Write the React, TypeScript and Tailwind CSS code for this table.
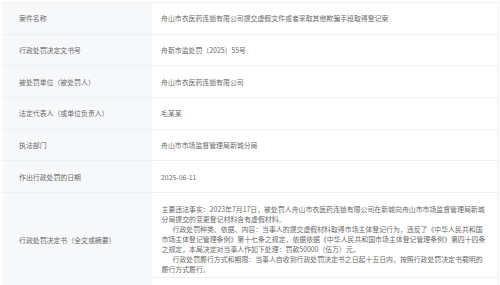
import React from "react";

const rows: [string, string][] = [
  ["案件名称", "舟山市衣医药连锁有限公司提交虚假文件或者采取其他欺骗手段取得登记案"],
  ["行政处罚决定文书号", "舟新市监处罚〔2025〕55号"],
  ["被处罚单位（被处罚人）", "舟山市衣医药连锁有限公司"],
  ["法定代表人（或单位负责人）", "毛某某"],
  ["执法部门", "舟山市市场监督管理局新城分局"],
  ["作出行政处罚的日期", "2025-06-11"],
];

export default function App() {
  return (
    <div
      className="w-[500px] h-[285px] overflow-hidden bg-white pt-[2px] pl-[2px]"
      style={{ fontFamily: '"Noto Sans CJK SC", "Noto Sans", sans-serif' }}
    >
      <div className="w-[497px] border-t border-r border-[#eef0f4] text-[6.9px] leading-[10px] text-[#6a6a6a]">
        {rows.map(([label, value]) => (
          <div key={label} className="flex h-[31.7px] border-b border-[#eef0f4]">
            <div className="w-[150px] shrink-0 bg-[#f7f8fa] pl-[17px] flex items-center">
              {label}
            </div>
            <div className="flex-1 pl-[9px] flex items-center">{value}</div>
          </div>
        ))}
        <div className="flex h-[93px]">
          <div className="w-[150px] shrink-0 bg-[#f7f8fa] pl-[17px] flex items-center">
            行政处罚决定书（全文或摘要）
          </div>
          <div className="flex-1 flex flex-col">
            <div className="h-[85px] border-b border-[#eef0f4] pl-[9.5px] pt-[10.7px] whitespace-nowrap">
              <p>
                主要违法事实：2023年7月17日，被处罚人舟山市衣医药连锁有限公司在新城向舟山市市场监督管理局新城
                <br />
                分局提交的变更登记材料含有虚假材料。
              </p>
              <p className="indent-[11px]">
                行政处罚种类、依据、内容：当事人的提交虚假材料取得市场主体登记行为，违反了《中华人民共和国
                <br />
                市场主体登记管理条例》第十七条之规定，依据依据《中华人民共和国市场主体登记管理条例》第四十四条
                <br />
                之规定，本局决定对当事人作如下处理：罚款50000（伍万）元。
              </p>
              <p className="indent-[11px]">
                行政处罚履行方式和期限：当事人自收到行政处罚决定书之日起十五日内，按照行政处罚决定书载明的
                <br />
                履行方式履行。
              </p>
            </div>
          </div>
        </div>
      </div>
    </div>
  );
}
